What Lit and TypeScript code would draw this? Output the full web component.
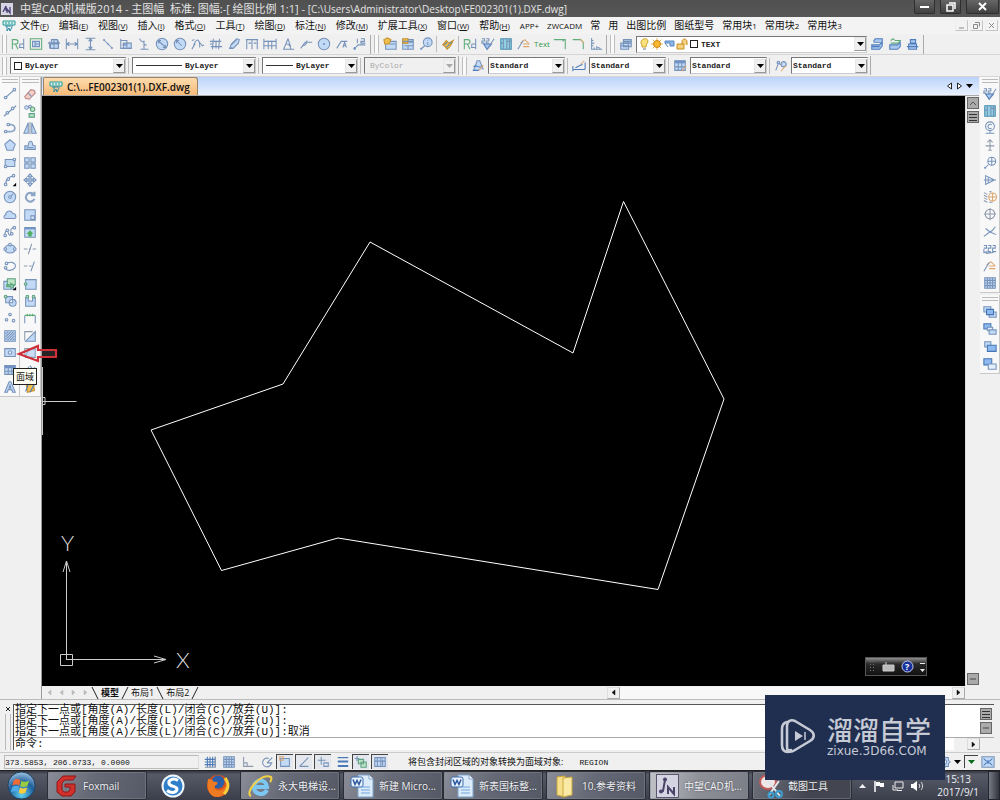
import { LitElement, html, css, svg } from 'lit';
import { customElement, property } from 'lit/decorators.js';

type Part = [string, string];

const o = (x: number, y: number, r: number) =>
  `M${x - r} ${y}a${r} ${r} 0 1 0 ${2 * r} 0a${r} ${r} 0 1 0 ${-2 * r} 0Z`;
const box = (x: number, y: number, w: number, h: number) => `M${x} ${y}h${w}v${h}h${-w}Z`;

/* Each icon is a list of [paint class, path] drawn on a 16-unit grid. */
const ICONS: Record<string, Part[]> = {
  /* dimension tools */
  rough: [['n', 'M1.500 14V3h4a2.500 2.500 0 0 1 0 5h-4M5 8l3 6'], ['l', 'M14.500 2v12M10 8h4.500M9 12h5.500M10 8v4']],
  view: [['n', 'M1.500 2h13v12h-13Z'], ['f', 'M4 5h8v6H4Z'], ['l', 'M7 5v6M7 8h5']],
  cluster: [['f', 'M5 3h7v4H5ZM4 8h9v5H4Z'], ['l', 'M1 7h14M3 13V5M13 13V4M8 2v12']],
  hdim: [['l', 'M1.500 2v12M14.500 2v12M2 8h12M5 6L2 8l3 2M11 6l3 2-3 2']],
  vdim: [['l', 'M3 1.500h11M3 14.500h11M8.500 2v12M6.500 5l2-3 2 3M6.500 11l2 3 2-3']],
  dots: [['l', 'M4 4l8 8'], ['s', o(3.5, 3.5, 1.2) + o(8, 8, 1) + o(12.5, 12.5, 1.2)]],
  boxes: [['f', 'M5 7h9v6H5Z'], ['l', 'M2 2v11h12M2 4h7v5M4 9h5v3']],
  perp: [['l', 'M8 4v10M4 14h9M3 2l2 3 3 1M8 9h3']],
  dia: [['f', o(8, 8, 6.5)], ['l', 'M3.500 4l9 8M4 7V4h3M12 9v3H9']],
  rad: [['f', o(8, 8, 6.5)], ['l', 'M4 4l6 6M4 7V4h3']],
  curve: [['l', 'M1 14l4-7M3 10c3-9 7-9 7 2M8 4l5 6 2-1M1 4l3-1']],
  frame: [['l', 'M1 5h13M2 11h13M5 2L4 14M12 2l-1 12M8 4v9M1 8h4']],
  slant: [['f', 'M3 13l2-5 6-6 3 1-1 4-6 6Z'], ['l', 'M3 13l3-1M5 9l6-6']],
  base: [['l', 'M1 3h14M2 3v11M8 3v11M14 3v11M4 7h3M10 7h3']],
  chain: [['l', 'M1 2v12M15 2v12M6 4v10M10 4v10M1 5h14M1 10h14']],
  angle: [['l', 'M8 2L3 14h12M8 2l3 9M6 8c3 0 5 2 5 6']],
  arc: [['l', 'M2 13l5-7h8M5 10c3-1 4-3 4-6']],
  center: [['f', o(8, 8, 6.5)], ['s', o(8, 8, 1.2)]],
  leaderA: [['l', 'M2 13l5-8h7M9 12l2-6 2 6M10 10h3']],
  num12: [['l', 'M1 14l5-5h8M5 2v5M9 2h4v3H9v2h5'], ['s', o(2, 13, 1.5)]],
  frameImg: [['f', 'M3 5h12v9H3Z'], ['y', 'M1 3l4-2 4 2-2 5H2Z'], ['l', 'M8 8h6']],
  titleBlk: [['f', 'M2 3h12v11H2Z'], ['y', 'M2 2h6v5H2Z'], ['l', 'M9 6h5M4 10h10M8 10v4M2 5h12']],
  balloon: [['f', o(10, 6, 5)], ['l', 'M6.500 10L2 14M10 3v1M10 6v3'], ['s', o(2.500, 13.500, 1.2)]],
  brush: [['y', 'M2 9l4-5 3 3 5-3-3 6-4 4-2-3Z'], ['b', 'M4 9l3-3M6 12l6-6']],
  tolT: [['b', 'M3 8h9l-5 6Z'], ['l', 'M7 14l8-12M1 2h3v2.500H1V7h3M6 2h3v2.500H6V7h3']],
  hatch: [['c', 'M2 2h12v12H2Z'], ['l', 'M5 2v12M9 2v12M12 2v12M2 7h3M9 5h5']],
  weld: [['q', 'M4 7l5-4 5 5M7 11h7M7 8h7'], ['l', 'M1 14l6-10']],
  corner1: [['n', 'M1 3h13v11M11 5l2-2']],
  corner2: [['n', 'M2 3h9l3 3v8'], ['q', 'M10 2l5 5']],
  ruler: [['l', 'M3 1v13h12M3 4h2M3 7h3M3 10h2M6 14v-2M9 14v-3M12 14v-2M8 11l5 2']],
  layers: [['f', 'M5 3h9v8H5ZM2 7h9v7H2Z'], ['l', 'M5 5h9M2 10h9M5 7h9']],
  layerA: [['b', 'M4 5l2-3h8v8l-3 4H2V9h9l3-4M2 11h9M4 6h8']],
  layerB: [['b', 'M2 9h9l3-3v5l-3 3H2Z'], ['n', 'M3 4l3-2 2 2M3 7h8l3-3H8']],
  layerC: [['b', 'M3 8h9v6H3ZM5 3h6v4H5ZM1 11h13']],
  style: [['f', 'M3 13L7 2h3l4 10'], ['b', 'M3 9c3-4 6 3 10-1M2 13h7'], ['q', 'M9 13l5-6']],
  dimstyle: [['b', 'M1 12h14M1 8v6M15 4v8M4 10l8-4'], ['q', 'M10 6l4-4']],
  table: [['f', 'M2 2h12v11H2Z'], ['s', 'M2 2h12v3H2Z'], ['l', 'M2 9h12M6 3v10M10 3v10'], ['q', 'M10 14l5-6']],
  mlead: [['l', 'M2 13l3-8 4 2'], ['f', o(11, 6, 3) + o(5, 4, 1.5)], ['q', 'M8 14l5-6']],
  /* draw tools */
  line: [['l', 'M3 12L13 3'], ['p', o(3, 12, 1.5) + o(13, 3, 1.5)]],
  xline: [['l', 'M1 14L15 2'], ['p', o(5, 10, 1.5) + o(11, 5, 1.5)]],
  pline: [['w2', 'M3 12h6c6 0 6-7 0-8H5'], ['p', o(3, 12, 1.5) + o(6, 4, 1.5)]],
  poly: [['f', 'M8 2l6 5-2.500 7h-7L2 7Z']],
  rect: [['f', 'M2.500 4h11v8h-11Z'], ['p', o(3, 12, 1.5) + o(13, 4, 1.5)]],
  arc3: [['l', 'M3 13c0-6 4-9 10-10'], ['p', o(3, 13, 1.5) + o(6, 7, 1.5) + o(12, 3, 1.5)], ['k', 'M15 11v4h-4Z']],
  circle: [['f', o(8, 8, 6.5)], ['l', 'M8 8l4-4'], ['p', o(8, 8, 1.5)]],
  cloud: [['f', 'M3 12c-3 0-2-4 0-4 0-5 6-6 8-2 4 0 5 6 2 6Z']],
  spline: [['l', 'M2 13c0-7 3-8 4-4s4 3 3-1 3-6 5-5'], ['p', o(2.500, 12, 1.5) + o(5, 6, 1.5) + o(10, 10, 1.5) + o(13, 3, 1.5)]],
  ellipse: [['f', 'M2 8c0-6 12-6 12 0s-12 6-12 0Z'], ['p', o(2.500, 8, 1.5) + o(8, 3, 1.5) + o(13.500, 8, 1.5)]],
  earc: [['l', 'M4 5c10-5 15 6 4 8-4 0-6-2-5-4'], ['p', o(4, 5, 1.5) + o(3, 10, 1.5)]],
  insert: [['f', 'M1 5h11v9H1Z'], ['e', 'M5 2h9v7H5Z'], ['n', 'M4 9h5V7l4 3-4 3v-2H4Z'], ['k', 'M15 11v4h-4Z']],
  block: [['f', 'M3 3h8v7H3Z' + o(11, 10, 4)], ['e', o(3, 3, 1.5)]],
  point: [['p', o(8, 4, 1.5) + o(4, 10, 1.5) + o(12, 11, 1.5)]],
  hatch2: [['f', box(2, 2, 12, 12)], ['l', 'M3 6l3-3M3 9l6-6M3 12l9-9M5 13l8-8M8 13l5-5M11 13l2-2']],
  region: [['f', 'M2 3h12v9H2Z'], ['p', o(8, 7.5, 2)]],
  tableD: [['f', 'M2 3h12v10H2Z'], ['s', 'M2 3h12v3H2Z'], ['l', 'M2 9.500h12M6 3v10M10 3v10']],
  text: [['f', 'M2 14L7 2h2l5 12h-3l-1-3H6l-1 3ZM7 9h2L8 6Z']],
  /* modify tools */
  erase: [['r', 'M2 11l7-8 4 1 1 3-7 7-4-1Z'], ['l', 'M6 7l4 4']],
  copy: [['p', o(4, 4, 2) + o(8, 3, 1.5)], ['e', o(11, 6, 2.5) + 'M7 11h6v4H7Z']],
  mirror: [['f', 'M1 14l5-12v12ZM15 14L10 2v12Z'], ['g', 'M8 1v14']],
  offset: [['f', 'M2 13V9h4c0-7 5-7 5-1l3 1v4Z'], ['l', 'M4 11h8']],
  array: [['f', box(2, 2, 5, 5) + box(9, 2, 5, 5) + box(2, 9, 5, 5) + box(9, 9, 5, 5)]],
  move: [['f', 'M8 1l2.500 3H9v3h3V5.500L15 8l-3 2.500V9H9v3h1.500L8 15l-2.500-3H7V9H4v1.500L1 8l3-2.500V7h3V4H5.500Z']],
  rotate: [['w', 'M12 5a5 5 0 1 0 1 5M13 2v4H9']],
  scale: [['f', box(2, 2, 12, 12)], ['p', box(9, 9, 4, 4)]],
  stretch: [['f', box(2, 3, 12, 11)], ['s', 'M2 3h12v2H2Z'], ['s2', 'M8 6l4 4h-2v3H6v-3H4Z']],
  trim: [['g', 'M1 8h4M11 8h4M6 14L10 2'], ['l', 'M7 8h2']],
  extend: [['g', 'M1 8h4M7 8h3'], ['l', 'M9 14l4-11']],
  brk: [['f', 'M3 3h12v11H3Z'], ['e', o(3, 8, 1.5)]],
  brk2: [['f', 'M3 4h3v4h5V4h3v10H3Z'], ['e', o(5, 3, 1.5) + o(12, 3, 1.5)]],
  join: [['l', 'M2 14V5M14 14V5'], ['n', 'M2 5h12M5 3v3M11 3v3M8 3v3']],
  chamfer: [['f', 'M14 3v11H3Z'], ['g', 'M2 13V3h9']],
  fillet: [['f', 'M14 3v10H3c0-6 4-10 11-10Z'], ['g', 'M2 12V3h7']],
  explode: [['l', 'M2 12l5-8M8 3l3 4 3-2M3 6l4 3-3 4M10 9l4 4']],
  overkill: [['y', 'M4 6l8-2 1 8-8 2Z'], ['b', 'M3 13l3-8M8 14l5-9M10 5l3 1']],
  /* symbols */
  datum: [['l', o(8, 6, 5) + 'M10 4.500a2.500 2.500 0 1 0 0 3.500M8 11v3M3 14h10']],
  up: [['g', 'M8 14V2M5 5l3-3 3 3M3 9h10M6 14h4']],
  detail: [['l', o(10, 6, 4.5) + 'M10 2v8M6 6h8M6 10l-4 4'], ['s', o(2.500, 13.500, 1.2)]],
  section: [['l', 'M3 3l10 5-10 5ZM1 8h14M6 5v6']],
  bolts: [['q', o(11, 8, 4.5) + 'M11 4v8M7 8h8'], ['g', 'M1 3l4 2M1 6l4 2M1 9l4 2M1 12l4 2M7 2h3M7 14h4']],
  target: [['g', o(8, 8, 5.5) + 'M8 1v14M1 8h14']],
  zig: [['l', 'M1 13l4-3 3-2-5-4M8 8l3-2 3-4M8 8l7 3']],
  numbers: [['l', 'M1 4h3v3H1M1 8v4l4-1M6 4h3v3H6v4h3M11 4h3v3h-3v4h4M3 13l9-1']],
  grid: [['f', box(2, 2, 12, 12)], ['l', 'M5 2v12M8 2v12M11 2v12M2 5h12M2 8h12M2 11h12']],
  ord1: [['f', box(1, 2, 8, 6) + box(7, 8, 8, 6)], ['v', box(4, 5, 8, 6)]],
  ord2: [['v', box(1, 2, 8, 6)], ['p', box(5, 6, 6, 4)], ['f', box(7, 9, 8, 5)]],
  ord3: [['f', box(2, 2, 7, 6)], ['v', box(5, 6, 10, 7)]],
  ord4: [['v', box(1, 2, 9, 7)], ['p', box(6, 8, 9, 6)]],
  /* status bar */
  snap: [['v2', 'M5 2v12M8 2v12M11 2v12M14 2v12M2 5h12M2 8h12M2 11h12'], ['g', 'M2 14h12V2']],
  ortho: [['g', 'M3 2v11h11M3 9h4v4']],
  polar: [['l', 'M13 9a5 5 0 1 1-3-5M8 9l6-6M8 9h6']],
  osnap: [['f', box(3, 4, 10, 9)], ['q', box(2, 2, 4, 4)]],
  track: [['l', 'M3 13L13 3M3 13h10']],
  dyn: [['l', 'M6 2v9M2 6h9M9 9h5v4H9Z']],
  lw: [['v2', 'M2 3h12M2 7h12M2 8h12M2 12h12M2 13h12']],
  cycle: [['l', 'M1 4h5M3.500 1v6'], ['e', box(5, 5, 6, 5) + box(8, 8, 6, 6)]],
  anno: [['f', 'M2 3h12v10H2Z'], ['l', 'M5 3v10M9 3v10M2 7h12M11 5v7']],
  gear: [['f', 'M8 1l2 2 3 0 0 3 2 2-2 2 0 3-3 0-2 2-2-2-3 0 0-3-2-2 2-2 0-3 3 0ZM8 5a3 3 0 1 0 .100 0Z']],
  full: [['f', box(1, 2, 14, 12)], ['v2', 'M3 4l3 3M13 4l-3 3M3 12l3-3M13 12l-3-3M7 7h2v2H7Z']],
};

@customElement('cad-icon')
class CadIcon extends LitElement {
  @property() name = '';
  static styles = css`
    :host { display: block; flex: none; width: 14px; height: 14px; }
    svg { display: block; width: 100%; height: 100%; overflow: visible; }
    path { fill: none; stroke: #7692b9; stroke-width: 1.2; }
    .f, .p { fill: #c3daf7; }
    .p { fill: #e4effc; }
    .s { fill: #6f93c4; stroke: none; }
    .s2 { fill: #4fae62; stroke: none; }
    .b { stroke: #4f7dbb; fill: #a9c8f0; }
    .n { stroke: #5cab78; }
    .e { stroke: #5ba082; fill: #bfe5c6; }
    .q { stroke: #dda56c; }
    .y { fill: #f0c04c; stroke: #c38e2d; }
    .c { fill: #8fd0e0; stroke: #4a8fb0; }
    .g { stroke: #8d99ab; }
    .r { fill: #f3cfc4; stroke: #b98484; }
    .k { fill: #000; stroke: none; }
    .w { stroke: #8ea6c6; stroke-width: 2.5; }
    .w2 { stroke: #8ea6c6; stroke-width: 2; }
    .v { fill: #8db8f0; stroke: #4676b4; }
    .v2 { stroke: #4b79b8; }
  `;
  render() {
    return html`<svg viewBox="0 0 16 16" aria-hidden="true">
      ${(ICONS[this.name] ?? []).map(([c, d]) => svg`<path class=${c} d=${d}></path>`)}
    </svg>`;
  }
}

/* Latin runs are set in a smaller face beside the Chinese characters. */
const mixed = (t: string) =>
  t.split(/([\x20-\x7e]+)/).filter(Boolean).map((p) => (/^[\x20-\x7e]/.test(p) ? html`<span class="lat">${p}</span>` : p));

const MENUS: [string, string?][] = [
  ['文件', 'F'], ['编辑', 'E'], ['视图', 'V'], ['插入', 'I'], ['格式', 'O'], ['工具', 'T'], ['绘图', 'D'],
  ['标注', 'N'], ['修改', 'M'], ['扩展工具', 'X'], ['窗口', 'W'], ['帮助', 'H'], ['APP+'], ['ZWCADM'],
  ['常'], ['用'], ['出图比例'], ['图纸型号'], ['常用块1'], ['常用块2'], ['常用块3'],
];
const DIMS = 'rough view cluster hdim vdim dots boxes perp dia rad curve frame slant base chain angle arc center leaderA num12'.split(' ');
const DRAW = 'line xline pline poly rect arc3 circle cloud spline ellipse earc insert block point hatch2 region tableD text'.split(' ');
const MODIFY = 'erase copy mirror offset array move rotate scale stretch trim extend brk brk2 join chamfer fillet explode overkill'.split(' ');
const SYMBOLS = 'tolT hatch datum up detail section bolts target zig numbers weld grid'.split(' ');
const ORDER = ['ord1', 'ord2', 'ord3', 'ord4'];
const STATUS: [string, boolean][] = [
  ['snap', false], ['grid', false], ['ortho', false], ['polar', false], ['osnap', true], ['track', true],
  ['dyn', true], ['lw', false], ['cycle', true], ['anno', true],
];
const PROMPT = '指定下一点或[角度(A)/长度(L)/闭合(C)/放弃(U)]:';

@customElement('app-root')
class AppRoot extends LitElement {
  static styles = css`
    :host {
      display: flex; flex-direction: column; position: relative; min-height: 100vh; overflow: hidden;
      background: #f0f0f0; color: #111; font: 10px/14px "Open Sans", "Noto Sans CJK SC", sans-serif;
    }
    * { box-sizing: border-box; }
    button { font: inherit; color: inherit; background: none; border: 0; padding: 0; margin: 0; display: flex; align-items: center; justify-content: center; }
    svg { display: block; flex: none; }
    .row { display: flex; align-items: center; }
    .grow { flex: 1; min-width: 0; }

    .title { height: 17px; background: linear-gradient(#505050, #575757); color: #e4e4e4; font-size: 11px; line-height: 16px; padding: 0 1px; gap: 7px; white-space: pre; overflow: hidden; }
    .title .name { flex: 1; min-width: 0; font-weight: 400; font-size: 11px; margin: 0; }
    .title .path { font-size: 10px; }
    .winbtns { display: flex; gap: 5px; height: 100%; }
    .winbtns button { width: 21px; height: 14px; background: linear-gradient(#666, #414141); border: 1px solid #2f2f2f; border-top: 0; border-radius: 0 0 2px 2px; }
    .winbtns .close { width: 33px; }

    .menu { height: 17px; background: #f3f3f3; padding: 0 2px; }
    .menu ul { display: flex; flex: 1; list-style: none; margin: 0 0 0 4px; padding: 0; gap: 8px; }
    .menu li button { white-space: pre; line-height: 16px; }
    .menu li.keyed { margin-right: 2px; }
    .menu .lat { font-size: 8px; }
    .menu .key { text-decoration: underline; }
    .menu .mdi { gap: 2px; display: flex; }
    .mdi button { width: 13px; height: 11px; border: 1px solid #c4c4c4; border-left-color: #eee; border-top-color: #eee; }

    .tools { height: 21px; border-bottom: 1px solid #d5d5d5; }
    .tools.two { height: 22px; }
    .grip { flex: none; width: 5px; height: 18px; border: solid #bdbdbd; border-width: 0 1px; margin: 0 2px 0 2px; background: #fafafa; }
    .vsep { flex: none; width: 3px; height: 16px; border-left: 1px solid #bcbcbc; margin-left: 1px; }
    .endbar { flex: none; width: 2px; height: 19px; border-left: 1px solid #aaa; margin-left: 1px; }
    .tool { width: 18px; height: 18px; flex: none; }
    .txt { color: #3c9a4d; font-size: 8px; }

    .combo { display: grid; height: 17px; flex: none; align-items: center; margin: 0 1px; background: #fff; border: 1px solid #777; border-right-color: #ccc; border-bottom-color: #ccc; }
    .combo > * { grid-area: 1 / 1; }
    .combo select { appearance: none; border: 0; margin: 0; background: none; width: 100%; height: 15px; padding: 0 14px 0 1px; color: #222; font: 700 8px/15px "Liberation Mono", monospace; border-radius: 0; }
    .combo .lead { display: flex; align-items: center; gap: 2px; padding-left: 3px; }
    .combo .arrow { justify-self: end; width: 12px; height: 14px; background: #f0f0f0; border: 1px solid #999; border-left-color: #e6e6e6; border-top-color: #e6e6e6; display: grid; place-items: center; pointer-events: none; }
    .sq { width: 8px; height: 8px; border: 1px solid #222; background: #fff; }
    .dash { display: block; height: 1px; background: #333; }
    .w77 { width: 77px; }
    .w92 { width: 92px; }
    .w96 { width: 96px; }
    .w116 { width: 116px; }
    .w124 { width: 124px; }
    .w232 { width: 231px; }
    .in14 select { padding-left: 14px; }
    .in34 select { padding-left: 33px; }
    .in52 select { padding-left: 52px; }
    .in66 select { padding-left: 64px; }
    .off, .off select { background: #f0f0f0; color: #aaa; opacity: 1; }
    .combo.off select { padding-left: 5px; font-weight: 400; }

    .main { flex: 1; display: flex; min-height: 0; }
    .side { display: flex; flex: none; position: relative; align-items: flex-start; }
    .bar { background: #f8f8f8; border: 1px solid #c8c8c8; border-top: 0; border-left: 0; width: 20px; }
    .bar.wide { width: 21px; }
    .hgrip { height: 4px; margin: 2px 1px 2px 2px; border: solid #bbb; border-width: 1px 0; }
    .cells { display: grid; grid-auto-rows: 1fr; justify-items: center; align-items: center; }
    .n18 { height: 311px; }
    .n12 { height: 207px; }
    .n4 { height: 70px; }
    .side.left { border-right: 1px solid #999; width: 42px; z-index: 1; }
    .side.right { flex-direction: column; width: 21px; padding-left: 1px; gap: 2px; }
    .pointer { position: absolute; left: 16px; top: 266px; width: 44px; height: 20px; overflow: visible; }
    .tip { position: absolute; left: 13px; top: 291px; background: #fffff4; border: 1px solid #222; font-size: 9px; line-height: 15px; padding: 0 2px; white-space: nowrap; }

    .center { flex: 1; min-width: 0; display: flex; flex-direction: column; }
    .files { display: flex; height: 19px; flex: none; background: linear-gradient(#bcd3fa, #e9f1ff); border-bottom: 1px solid #aaa; padding-left: 1px; align-items: stretch; }
    .files .file { background: linear-gradient(#fddcae, #f6ba78); border: 1px solid #9a8468; border-bottom: 0; border-radius: 2px 3px 0 0; padding: 0 7px 0 5px; gap: 4px; font-weight: 600; font-size: 10px; color: #111; }
    .files .nav { display: flex; gap: 3px; align-items: center; margin-left: auto; padding-right: 6px; }
    .body { flex: 1; display: flex; min-height: 0; }
    .model { flex: 1; min-width: 0; background: #000; position: relative; }
    .model > svg { position: absolute; inset: 0; width: 100%; height: 100%; }
    .ink { stroke: #fff; fill: none; stroke-width: 1; }
    .thin { stroke: #ccc; fill: none; stroke-width: 1; }
    .axis { fill: #ddd; font: 300 22px Lato, sans-serif; }
    .ime { position: absolute; right: 38px; bottom: 10px; width: 62px; height: 19px; background: linear-gradient(#8f8f8f, #2a2a2a 35%, #111); border: 1px solid #555; display: flex; align-items: center; gap: 6px; padding: 0 3px; }
    .vscroll { width: 14px; flex: none; background: #f0f0f0; border-left: 1px solid #ddd; display: flex; flex-direction: column; align-items: center; padding: 1px 0; gap: 2px; }
    .vscroll button, .sbox { width: 12px; height: 12px; background: #aaa; border: 1px solid #666; flex: none; display: flex; align-items: center; justify-content: center; }
    .vscroll .last { margin-top: auto; }

    .sheets { height: 13px; flex: none; display: flex; background: #f0f0f0; align-items: center; padding-left: 1px; font-size: 9px; }
    .sheets .pg { width: 12px; height: 12px; }
    .sheets .sheet { line-height: 12px; padding: 0 2px; }
    .sheets .on { font-weight: 700; }
    .sheets .track { flex: 1; height: 12px; background: #f8f8f8; }
    .sheets .sp { flex: 0 1 408px; }
    .sbtn { width: 13px; height: 12px; flex: none; border: 1px solid #aaa; border-left-color: #ddd; border-top-color: #ddd; background: #f0f0f0; }

    .cmd { height: 53px; flex: none; display: flex; border-top: 1px solid #bbb; padding: 4px 6px 2px 3px; font: 11px/11px "Liberation Mono", "Noto Sans CJK SC", monospace; }
    .cmd .side { flex-direction: column; width: 10px; align-items: center; }
    .cmd .grips { flex: 1; width: 6px; border: solid #bbb; border-width: 0 1px; }
    .cmd .pane { flex: 1; min-width: 0; background: #fff; border: solid #555; border-width: 1px 0 0 1px; display: flex; flex-direction: column; }
    .log { height: 33px; border-bottom: 1px solid #aaa; white-space: pre; padding-left: 1px; display: flex; }
    .log p { margin: 0; height: 11px; line-height: 11px; }
    .log .vs { width: 14px; display: flex; flex-direction: column; gap: 2px; padding-top: 3px; background: #f0f0f0; }
    .entry { flex: 1; display: flex; align-items: center; padding-left: 1px; }
    .entry input { flex: 1; min-width: 0; border: 0; outline: 0; height: 11px; padding: 0; background: none; font: inherit; }
    .entry .hs { display: flex; width: 40px; background: #f0f0f0; justify-content: space-between; padding-right: 14px; }

    .status { height: 18px; flex: none; display: flex; align-items: center; padding: 0 5px 0 4px; border-top: 1px solid #ccc; background: #f0f0f0; font-size: 9px; }
    .coords { width: 195px; height: 14px; border: 1px solid #bbb; border-right-color: #ddd; font: 8px/13px "Liberation Mono", monospace; white-space: pre; margin-right: 1px; }
    .mode { width: 19px; height: 15px; flex: none; }
    .mode.down { width: 17px; margin-right: 2px; border: solid #444; border-width: 1px 0 0 1px; background: #e4e8ee; }
    .hint { margin-left: 18px; white-space: nowrap; }
    .hint .code { font: 8px "Liberation Mono", monospace; margin-left: 16px; }
    .status .end { margin-left: auto; display: flex; align-items: center; gap: 3px; }
    .green { width: 14px; height: 13px; border: solid #444; border-width: 1px 0 0 1px; }

    .task { height: 30px; flex: none; display: flex; align-items: stretch; background: linear-gradient(#343741, #565a67 12%, #474b58 60%, #3b3e49); border-top: 1px solid #222; color: #eef0f4; font-size: 10px; padding-left: 3px; }
    .orb { width: 36px; margin-right: 8px; }
    .app { width: 100px; margin-right: 3px; justify-content: flex-start; gap: 5px; padding: 0 6px; background: linear-gradient(115deg, #8b8e98, #666a76 45%, #555966); border: 1px solid #2c2e36; border-radius: 2px; box-shadow: inset 0 0 0 1px #83869180; white-space: nowrap; text-shadow: 0 0 2px #0008; overflow: hidden; }
    .app.on { background: linear-gradient(100deg, #c2c3c8, #8e9098 50%, #7b7e87); }
    .app.join { margin-right: 0; }
    .app.dim { background: linear-gradient(115deg, #6f727c, #434651 60%); }
    .pin { width: 45px; }
    .tray { margin-left: auto; display: flex; align-items: center; gap: 7px; }
    .clock { text-align: center; line-height: 13px; margin: 0 2px 0 7px; }
    .desk { width: 12px; background: linear-gradient(90deg, #777a84, #32353e); border: 1px solid #24262d; align-self: stretch; }

    .mark { position: absolute; right: 55px; bottom: 20px; width: 180px; height: 85px; background: #202e50; color: #c6cad4; display: flex; align-items: center; padding: 0 0 4px 14px; gap: 11px; }
    .mark .big { font: 500 26px/30px "Noto Sans CJK SC", sans-serif; }
    .mark .url { font: 12px/14px "DejaVu Sans", sans-serif; }
    .mark div { white-space: nowrap; }
  `;

  private tool = (name: string, cls = 'tool') =>
    html`<button class=${cls} aria-label=${name}><cad-icon name=${name}></cad-icon></button>`;

  private arrow = (color = '#000') =>
    html`<svg width="7" height="4" viewBox="0 0 7 4"><path d="M0 0h7L3.500 4Z" fill=${color}></path></svg>`;

  private tri = (left: boolean, c = '#111') =>
    html`<svg width="5" height="7" viewBox="0 0 5 7"><path d=${left ? 'M4 1v5L1 3.500Z' : 'M1 1v5L4 3.500Z'} fill=${c} stroke=${c} stroke-width=".5"></path></svg>`;

  private combo(label: string, value: string, cls: string, lead: unknown = '', disabled = false) {
    return html`<label class="combo ${cls}">
      <select aria-label=${label} ?disabled=${disabled}><option>${value}</option></select>
      <span class="lead">${lead}</span><span class="arrow">${this.arrow(disabled ? '#aaa' : '#000')}</span>
    </label>`;
  }

  private logo = html`<svg width="14" height="12" viewBox="0 0 14 12">
    <path d="M1 1h12v4H1Z" fill="#d7f0ee" stroke="#259a94"></path><path d="M3 3h8" stroke="#259a94" stroke-dasharray="2 1"></path>
    <path d="M3 6h8M5 6v5l2-3 1 3 2-4" fill="none" stroke="#2c8aa6"></path></svg>`;

  private lines = html`<svg width="8" height="8" viewBox="0 0 8 8"><path d="M0 1.500h8M0 4.500h8M0 7.500h8" stroke="#333"></path></svg>`;

  private word = html`<svg width="24" height="24" viewBox="0 0 24 24">
    <path d="M8 1h11l4 4v18H8Z" fill="#dcebfa" stroke="#7fa4cd"></path><path d="M19 1v4h4" fill="#fff" stroke="#7fa4cd"></path>
    <path d="M11 13h9M11 16h9M11 19h9" stroke="#6fa5dc"></path><rect x="1" y="3" width="12" height="10" rx="2" fill="#e8f1fc" stroke="#3e6fae"></rect>
    <path d="M3 5.500l2 5 2-4 2 4 2-5" fill="none" stroke="#2a579d" stroke-width="1.500"></path></svg>`;

  render() {
    return html`
      <header class="title row">
        <svg width="12" height="12" viewBox="0 0 12 12"><rect width="12" height="12" fill="#d8d6e4"></rect>
          <path d="M2 9l3-6v5M6 10V6l3 4V4" fill="none" stroke="#4b4175" stroke-width="1.300"></path></svg>
        <h1 class="name">中望CAD机械版2014 - 主图幅  标准: 图幅:-[ 绘图比例 1:1] - <span class="path">[C:\\Users\\Administrator\\Desktop\\FE002301(1).DXF.dwg]</span></h1>
        <div class="winbtns">
          <button aria-label="最小化"><svg width="10" height="8"><path d="M0 4h9" stroke="#fff" stroke-width="2"></path></svg></button>
          <button aria-label="还原"><svg width="10" height="10"><path d="M3 1h6v6M1 3h6v6H1Z" fill="none" stroke="#fff" stroke-width="1.500"></path></svg></button>
          <button class="close" aria-label="关闭"><svg width="9" height="9"><path d="M1 1l7 7M8 1L1 8" stroke="#fff" stroke-width="2"></path></svg></button>
        </div>
      </header>

      <nav class="menu row">
        ${this.logo}
        <ul>${MENUS.map(([t, k]) => html`<li class=${k ? 'keyed' : ''}><button><span>${mixed(t)}${k ? html`<span class="lat">(<span class="key">${k}</span>)</span>` : ''}</span></button></li>`)}</ul>
        <div class="mdi">
          <button aria-label="最小化文档"><svg width="7" height="7"><path d="M1 6h5" stroke="#888"></path></svg></button>
          <button aria-label="还原文档"><svg width="7" height="7"><path d="M2 .500h4.500v4M.500 2.500h4v4h-4Z" fill="none" stroke="#888"></path></svg></button>
          <button aria-label="关闭文档"><svg width="7" height="7"><path d="M1 1l5 5M6 1L1 6" stroke="#888"></path></svg></button>
        </div>
      </nav>

      <div class="tools row">
        <span class="grip"></span>
        ${DIMS.map((n) => this.tool(n))}
        <span class="endbar"></span><span class="grip"></span>
        ${['frameImg', 'titleBlk', 'balloon'].map((n) => this.tool(n))}
        <span class="vsep"></span>${this.tool('brush', 'tool')}<span class="vsep"></span>
        ${['rough', 'tolT', 'hatch', 'weld'].map((n) => this.tool(n))}
        <button class="tool txt">Text</button>
        ${['corner1', 'corner2', 'ruler'].map((n) => this.tool(n))}
        <span class="endbar"></span><span class="grip"></span>
        ${this.tool('layers')}
        ${this.combo('图层', 'TEXT', 'w232 in66', html`
          <svg width="48" height="14" viewBox="0 0 48 14">
            <path d="M3 10V8C-1 3 8-1 9 4c0 2-2 3-2 6Z" transform="translate(-1 0)" fill="#fbe27b" stroke="#c9a12c"></path><path d="M3 12h3" stroke="#678"></path>
            <path d="M17 1v12M11 7h12M12.500 2.500l9 9M21.500 2.500l-9 9" stroke="#e8b65a"></path><circle cx="17" cy="7" r="3.500" fill="#f7b72e" stroke="#c98717"></circle>
            <path d="M25 4h9v5h-4V6h-5Z" fill="#8fb8ea" stroke="#5785c0"></path><path d="M25 6l3 4" stroke="#5785c0"></path>
            <path d="M37 7h7v5h-7ZM42 7V5c0-4 5-4 5 0v3" fill="#f0bd45" fill-opacity=".7" stroke="#c58c22"></path>
          </svg><span class="sq"></span>`)}
        ${['layerA', 'layerB', 'layerC'].map((n) => this.tool(n))}
        <span class="endbar"></span>
      </div>

      <div class="tools two row">
        <span class="grip"></span>
        ${this.combo('颜色', 'ByLayer', 'w116 in14', html`<span class="sq"></span>`)}<span class="vsep"></span>
        ${this.combo('线型', 'ByLayer', 'w124 in52', html`<span class="dash" style="width:46px"></span>`)}<span class="vsep"></span>
        ${this.combo('线宽', 'ByLayer', 'w96 in34', html`<span class="dash" style="width:27px"></span>`)}<span class="vsep"></span>
        ${this.combo('打印样式', 'ByColor', 'w92 off', '', true)}
        <span class="endbar"></span><span class="grip"></span>
        ${this.tool('style')}${this.combo('文字样式', 'Standard', 'w77')}<span class="vsep"></span>
        ${this.tool('dimstyle')}${this.combo('标注样式', 'Standard', 'w77')}<span class="vsep"></span>
        ${this.tool('table')}${this.combo('表格样式', 'Standard', 'w77')}<span class="vsep"></span>
        ${this.tool('mlead')}${this.combo('引线样式', 'Standard', 'w77')}
        <span class="endbar"></span>
      </div>

      <div class="main">
        <div class="side left">
          <div class="bar"><div class="hgrip"></div><div class="cells n18">${DRAW.map((n) => this.tool(n, ''))}</div></div>
          <div class="bar wide"><div class="hgrip"></div><div class="cells n18">${MODIFY.map((n) => this.tool(n, ''))}</div></div>
          <svg class="pointer" viewBox="0 0 44 20"><path d="M3 11L22 3v4h18v7H22v4Z" fill="#f4f4f4" fill-opacity=".15" stroke="#cf2f38" stroke-width="2.200"></path></svg>
          <div class="tip">面域</div>
        </div>

        <div class="center">
          <div class="files">
            <button class="file">${this.logo}<span>C:\\...FE002301(1).DXF.dwg</span></button>
            <div class="nav">
              <button aria-label="上一个"><svg width="7" height="8"><path d="M5.500 1v6L1.500 4Z" fill="#fff" stroke="#222"></path></svg></button>
              <button aria-label="下一个"><svg width="7" height="8"><path d="M1.500 1v6L5.500 4Z" fill="#fff" stroke="#222"></path></svg></button>
              <button aria-label="列表">${this.arrow()}</button>
            </div>
          </div>
          <div class="body">
            <div class="model">
              <svg viewBox="42 96 923 590" preserveAspectRatio="xMinYMin meet" role="img" aria-label="模型空间">
                <path class="ink" d="M370 242L573 353 623.500 201.500 724 399 658 589.500 338 538 221.500 570.500 151 430 283 384Z"></path>
                <path class="thin" d="M60.500 654.500h12v11h-12ZM66.500 660V561M63 572l3.500-11 3.500 11M66 659.500h99M154 656l12 3.500-12 3.500"></path>
                <text class="axis" x="61" y="551">Y</text><text class="axis" x="176" y="668">X</text>
                <path class="thin" d="M42.500 367v68M42 401.500h34.500M42 397.500h3v7h-3"></path>
              </svg>
              <div class="ime">
                <svg width="7" height="13"><path d="M1.500 1v12M4.500 1v12" stroke="#777" stroke-dasharray="1 2"></path></svg>
                <svg width="13" height="11"><path d="M1 4h11v6H1ZM4 4V1" fill="#bbb" stroke="#ccc"></path></svg>
                <svg width="13" height="13"><circle cx="6.500" cy="6.500" r="5.500" fill="#17309a" stroke="#c7cff0"></circle><text x="4" y="10" fill="#fff" font-size="9" font-weight="700">?</text></svg>
                <svg width="6" height="12"><path d="M0 2h5v1H0ZM0 8h5L2.500 11Z" fill="#eee"></path></svg>
              </div>
            </div>
            <div class="vscroll">
              <button aria-label="上"><svg width="6" height="4"><path d="M0 4l3-3 3 3" fill="none" stroke="#555"></path></svg></button>
              <span class="sbox">${this.lines}</span>
              <button class="last" aria-label="下"><svg width="6" height="2"><path d="M0 1h6" stroke="#444"></path></svg></button>
            </div>
          </div>
          <div class="sheets">
            <button class="pg" aria-label="首页">${this.tri(true, '#bbb')}</button><button class="pg" aria-label="上页">${this.tri(true, '#bbb')}</button>
            <button class="pg" aria-label="下页">${this.tri(false, '#bbb')}</button><button class="pg" aria-label="末页">${this.tri(false, '#bbb')}</button>
            <svg width="8" height="12"><path d="M1 0l6 12" stroke="#222"></path></svg><button class="sheet on">模型</button>
            <svg width="8" height="12"><path d="M7 0L1 12" stroke="#222"></path></svg><button class="sheet">布局1</button>
            <svg width="8" height="12"><path d="M1 0l6 12" stroke="#222"></path></svg><button class="sheet">布局2</button>
            <svg width="8" height="12"><path d="M7 0L1 12" stroke="#222"></path></svg>
            <span class="sp"></span>
            <button class="sbtn" aria-label="左">${this.tri(true)}</button><span class="track"></span>
            <button class="sbtn" aria-label="右">${this.tri(false)}</button><svg width="14" height="12"></svg>
          </div>
        </div>

        <div class="side right">
          <div class="bar"><div class="hgrip"></div><div class="cells n12">${SYMBOLS.map((n) => this.tool(n, ''))}</div></div>
          <div class="bar"><div class="hgrip"></div><div class="cells n4">${ORDER.map((n) => this.tool(n, ''))}</div></div>
        </div>
      </div>

      <section class="cmd">
        <div class="side"><svg width="6" height="10"><path d="M1 3l4 4M5 3L1 7" stroke="#222"></path></svg><span class="grips"></span></div>
        <div class="pane">
          <div class="log"><div class="grow"><p>${PROMPT}</p><p>${PROMPT}</p><p>${PROMPT}取消</p></div>
            <div class="vs"><span class="sbox">${this.lines}</span><span class="sbox"><svg width="6" height="2"><path d="M0 1h6" stroke="#444"></path></svg></span></div>
          </div>
          <div class="entry"><label for="cmd">命令:</label><input id="cmd" autocomplete="off" />
            <div class="hs"><span></span><button class="sbtn" aria-label="右移">${this.tri(false)}</button></div></div>
        </div>
      </section>

      <section class="status">
        <output class="coords">373.5853, 206.0733, 0.0000</output>
        ${STATUS.map(([n, down]) => this.tool(n, down ? 'mode down' : 'mode'))}
        <span class="hint">将包含封闭区域的对象转换为面域对象:<span class="code">REGION</span></span>
        <div class="end">
          <button aria-label="设置"><cad-icon name="gear"></cad-icon></button><button aria-label="设置菜单">${this.arrow()}</button>
          <button class="green" aria-label="过滤">${this.arrow('#0a6b1c')}</button><button aria-label="全屏"><cad-icon name="full"></cad-icon></button>
        </div>
      </section>

      <footer class="task">
        <button class="orb" aria-label="开始"><svg width="29" height="29" viewBox="0 0 30 30">
          <defs><radialGradient id="g" cx=".5" cy=".85" r=".8"><stop offset="0" stop-color="#5fd0f0"></stop><stop offset=".6" stop-color="#1f5f9c"></stop><stop offset="1" stop-color="#8fb7d8"></stop></radialGradient></defs>
          <circle cx="15" cy="15" r="14" fill="url(#g)" stroke="#20405f"></circle>
          <path d="M7 9.500c3-2 5-1.500 7 0l-1.500 5.500c-2-1.500-4-1.500-7 0Z" fill="#ef6b35"></path><path d="M15 10c2 1.500 4 1.500 8 0l-2 5.500c-3 1.500-5 1-7.500 0Z" fill="#9bcb43"></path>
          <path d="M5.500 16.500c3-1.500 5-1.500 7 0L11 22c-2-1.500-4-1.500-7 0Z" fill="#4fa9e6"></path><path d="M13.500 17c2 1.500 4 1.500 7.500 0l-2 5.500c-3 1.500-5 1-7 0Z" fill="#fbca3f"></path></svg></button>
        <button class="app"><svg width="24" height="24" viewBox="0 0 24 24"><path d="M22 2H9L3 8v10l5 4h9l4-4V10H11v3h5v3l-2 2h-4l-2-2V9l3-3h8Z" fill="#d0312c" stroke="#8d1614"></path></svg>Foxmail</button>
        <button class="pin" aria-label="搜狗"><svg width="24" height="24" viewBox="0 0 24 24"><circle cx="12" cy="12" r="11.500" fill="#f2f7fc"></circle><circle cx="12" cy="12" r="9.500" fill="#2e7fc9"></circle>
          <path d="M17 6.500C12 3.500 7 6 8 9.500s9 2.500 8 6-6 4-10 1" fill="none" stroke="#fff" stroke-width="3"></path></svg></button>
        <button class="pin" aria-label="火狐"><svg width="24" height="24" viewBox="0 0 24 24"><circle cx="12" cy="12" r="11" fill="#d9541a"></circle><circle cx="12" cy="8" r="6.500" fill="#2c5fa8"></circle>
          <path d="M2 5c2 0 4 0 6 3 3-1 5 1 2 3-2 1-2 4 1 5 4 1 8-1 9-5 2 6-3 12-9 12S0 17 2 5Z" fill="#ee7a22"></path><path d="M19 4c4 5 4 11-1 16" fill="none" stroke="#fbcf3c" stroke-width="3"></path></svg></button>
        <button class="app"><svg width="26" height="26" viewBox="0 0 26 26"><path d="M20 17c-3 6-13 5-13-3s12-9 13 0H8" fill="none" stroke="#7cc8f2" stroke-width="4"></path>
          <path d="M4 23C-3 20 14-1 24 4c1 1 0 4-1 5" fill="none" stroke="#f2cf47" stroke-width="2"></path></svg>永大电梯设...</button>
        <button class="app join">${this.word}新建 Micro...</button>
        <button class="app">${this.word}新表国标整...</button>
        <button class="app"><svg width="24" height="24" viewBox="0 0 24 24"><path d="M4 3l8-1v21l-8-2Z" fill="#f7e08b" stroke="#c9a63c"></path><path d="M10 4l9-1v18l-9 2Z" fill="#fbeaa6" stroke="#c9a63c"></path></svg>10.参考资料</button>
        <button class="app on"><svg width="23" height="24" viewBox="0 0 23 24"><rect x=".500" y=".500" width="22" height="23" fill="#d5d4e2" stroke="#5a566e"></rect>
          <path d="M9 6L7 17l-3 1M12 20v-7l6 7v-7" fill="none" stroke="#4b4468" stroke-width="2"></path><circle cx="5" cy="17.500" r="2" fill="#4b4468"></circle><circle cx="9" cy="5.500" r="2" fill="#4b4468"></circle></svg>中望CAD机...</button>
        <button class="app dim"><svg width="24" height="26" viewBox="0 0 24 26"><ellipse cx="9" cy="9" rx="8" ry="7" fill="#efe6e6" stroke="#c05a5a" stroke-width="2"></ellipse>
          <path d="M9 8l12 15M20 8L10 22" stroke="#dfe6ee" stroke-width="2"></path><circle cx="20" cy="21" r="3" fill="none" stroke="#3b9ed0" stroke-width="2"></circle><circle cx="12" cy="22" r="2.500" fill="none" stroke="#3b9ed0" stroke-width="2"></circle></svg>截图工具</button>
        <div class="tray">
          <svg width="7" height="4"><path d="M0 4L3.500 0 7 4Z" fill="#eee"></path></svg>
          <svg width="12" height="12"><path d="M2 1v11" stroke="#fff" stroke-width="1.500"></path><path d="M3 2h4v1h4v4H7V6H3Z" fill="#fff"></path></svg>
          <svg width="12" height="12"><path d="M3 2h8v6H3ZM1 5v5h5M5 10.500h5" fill="none" stroke="#eee"></path></svg>
          <svg width="12" height="12"><path d="M0 4h2l4-3v10L2 8H0Z" fill="#fff"></path><path d="M8 4c1 1 1 3 0 4M10 2c2 2 2 6 0 8" fill="none" stroke="#ddd"></path></svg>
          <div class="clock">15:13<br />2017/9/1</div>
          <button class="desk" aria-label="显示桌面"></button>
        </div>
      </footer>

      <aside class="mark">
        <svg width="37" height="38" viewBox="0 0 37 38"><g fill="none" stroke="#c6cad4" stroke-width="2.600" stroke-linejoin="round" stroke-linecap="round">
          <path d="M12 33c-4 1-4-1-4-4V9c0-5 4-7 8-5l15 9c5 3 5 8 0 11l-15 9c-3 2-6 2-8 1"></path><path d="M8 5C4 6 3 8 3 12v16c0 4 2 7 6 7"></path></g>
          <path d="M16 14l8 5-8 5Z" fill="#c6cad4"></path><path d="M26 15v8" stroke="#c6cad4" stroke-width="1.500"></path></svg>
        <div><div class="big">溜溜自学</div><div class="url">zixue.3D66.COM</div></div>
      </aside>
    `;
  }
}
